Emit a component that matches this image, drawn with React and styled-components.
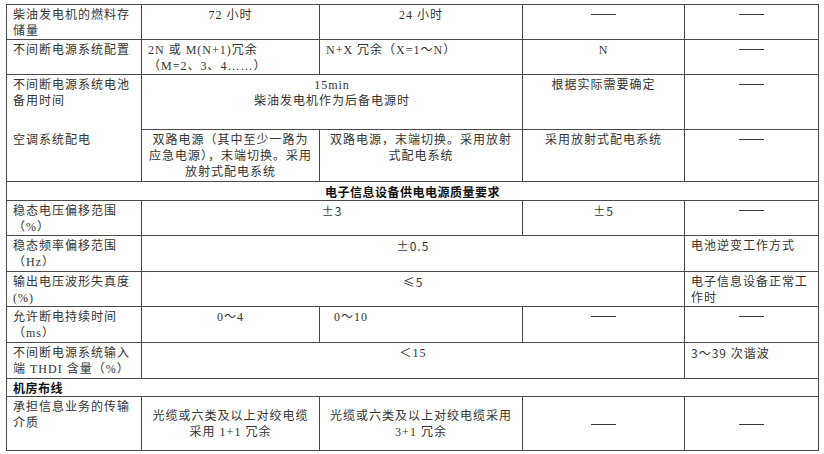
import React from 'react';
import styled, { createGlobalStyle } from 'styled-components';

const GlobalStyle = createGlobalStyle`
  html, body {
    margin: 0;
    padding: 0;
    background: #fff;
  }
  body {
    font-family: "Liberation Serif", "Noto Sans CJK SC", serif;
  }
`;

const Page = styled.div`
  padding: 4px 6px 0 6px;
  width: 824px;
  height: 454px;
  box-sizing: border-box;
`;

const Table = styled.table`
  width: 812px;
  border-collapse: collapse;
  table-layout: fixed;
  border: 1px solid #222;
  font-size: 12px;
  line-height: 16px;
  color: #333;
`;

const Row = styled.tr`
  height: ${p => p.$h}px;
`;

const Cell = styled.td`
  border: 1px solid #4a4a4a;
  padding: ${p => (p.$mid ? '0 6px' : '2px 6px 0')};
  padding-left: ${p => (p.$indent ? `${p.$indent}px` : '6px')};
  vertical-align: ${p => (p.$mid ? 'middle' : 'top')};
  text-align: ${p => p.$align || 'left'};
  letter-spacing: 1px;
  word-break: break-all;
  font-family: ${p => (p.$cjk ? '"Noto Sans CJK SC", sans-serif' : 'inherit')};
  ${p => p.$openBottom && 'border-bottom: none;'}
  ${p => p.$openTop && 'border-top: none;'}
`;

const SectionCell = styled.td`
  border: 1px solid #4a4a4a;
  padding: 0 6px;
  height: ${p => p.$h}px;
  line-height: 15px;
  vertical-align: middle;
  text-align: ${p => p.$align || 'left'};
  font-weight: bold;
  color: #111;
  letter-spacing: 0.5px;
  font-family: "Noto Sans CJK SC", sans-serif;
`;

const Dash = styled.span`
  display: inline-block;
  width: 25px;
  height: 1px;
  background: #3a3a3a;
  vertical-align: middle;
  margin-top: ${p => (p.$mid ? '0' : '-3px')};
`;

const Line = styled.div``;

export default function App() {
  return (
    <>
      <GlobalStyle />
      <Page>
        <Table>
          <colgroup>
            <col style={{ width: 135 }} />
            <col style={{ width: 178 }} />
            <col style={{ width: 203 }} />
            <col style={{ width: 162 }} />
            <col style={{ width: 134 }} />
          </colgroup>
          <tbody>
            <Row $h={35}>
              <Cell>柴油发电机的燃料存储量</Cell>
              <Cell $align="center">72 小时</Cell>
              <Cell $align="center">24 小时</Cell>
              <Cell $align="center"><Dash /></Cell>
              <Cell $align="center"><Dash /></Cell>
            </Row>
            <Row $h={35}>
              <Cell>不间断电源系统配置</Cell>
              <Cell>
                <Line>2N 或 M(N+1)冗余</Line>
                <Line>（M=2、3、4……）</Line>
              </Cell>
              <Cell>N+X 冗余（X=1～N）</Cell>
              <Cell $align="center">N</Cell>
              <Cell $align="center"><Dash /></Cell>
            </Row>
            <Row $h={55}>
              <Cell $openBottom>不间断电源系统电池备用时间</Cell>
              <Cell colSpan={2} $align="center">
                <Line>15min</Line>
                <Line>柴油发电机作为后备电源时</Line>
              </Cell>
              <Cell $align="center">根据实际需要确定</Cell>
              <Cell $align="center"><Dash /></Cell>
            </Row>
            <Row $h={52}>
              <Cell $openTop>空调系统配电</Cell>
              <Cell $align="center">双路电源（其中至少一路为应急电源），末端切换。采用放射式配电系统</Cell>
              <Cell $align="center">双路电源，末端切换。采用放射式配电系统</Cell>
              <Cell $align="center">采用放射式配电系统</Cell>
              <Cell $align="center"><Dash /></Cell>
            </Row>
            <tr>
              <SectionCell colSpan={5} $h={18} $align="center">电子信息设备供电电源质量要求</SectionCell>
            </tr>
            <Row $h={35}>
              <Cell>稳态电压偏移范围（%）</Cell>
              <Cell colSpan={2} $align="center" $cjk>±3</Cell>
              <Cell $align="center" $cjk>±5</Cell>
              <Cell $align="center"><Dash /></Cell>
            </Row>
            <Row $h={36}>
              <Cell>稳态频率偏移范围（Hz）</Cell>
              <Cell colSpan={3} $align="center" $cjk>±0.5</Cell>
              <Cell>电池逆变工作方式</Cell>
            </Row>
            <Row $h={35}>
              <Cell>输出电压波形失真度(%)</Cell>
              <Cell colSpan={3} $align="center" $cjk>≤5</Cell>
              <Cell>电子信息设备正常工作时</Cell>
            </Row>
            <Row $h={36}>
              <Cell>允许断电持续时间（ms）</Cell>
              <Cell $align="center">0～4</Cell>
              <Cell $indent={14}>0～10</Cell>
              <Cell $align="center"><Dash /></Cell>
              <Cell $align="center"><Dash /></Cell>
            </Row>
            <Row $h={36}>
              <Cell>不间断电源系统输入端 THDI 含量（%）</Cell>
              <Cell colSpan={3} $align="center">＜15</Cell>
              <Cell $cjk>3～39 次谐波</Cell>
            </Row>
            <tr>
              <SectionCell colSpan={5} $h={17}>机房布线</SectionCell>
            </tr>
            <Row $h={54}>
              <Cell>承担信息业务的传输介质</Cell>
              <Cell $align="center" $mid>光缆或六类及以上对绞电缆采用 1+1 冗余</Cell>
              <Cell $align="center" $mid>光缆或六类及以上对绞电缆采用 3+1 冗余</Cell>
              <Cell $align="center" $mid><Dash $mid /></Cell>
              <Cell $align="center" $mid><Dash $mid /></Cell>
            </Row>
          </tbody>
        </Table>
      </Page>
    </>
  );
}
